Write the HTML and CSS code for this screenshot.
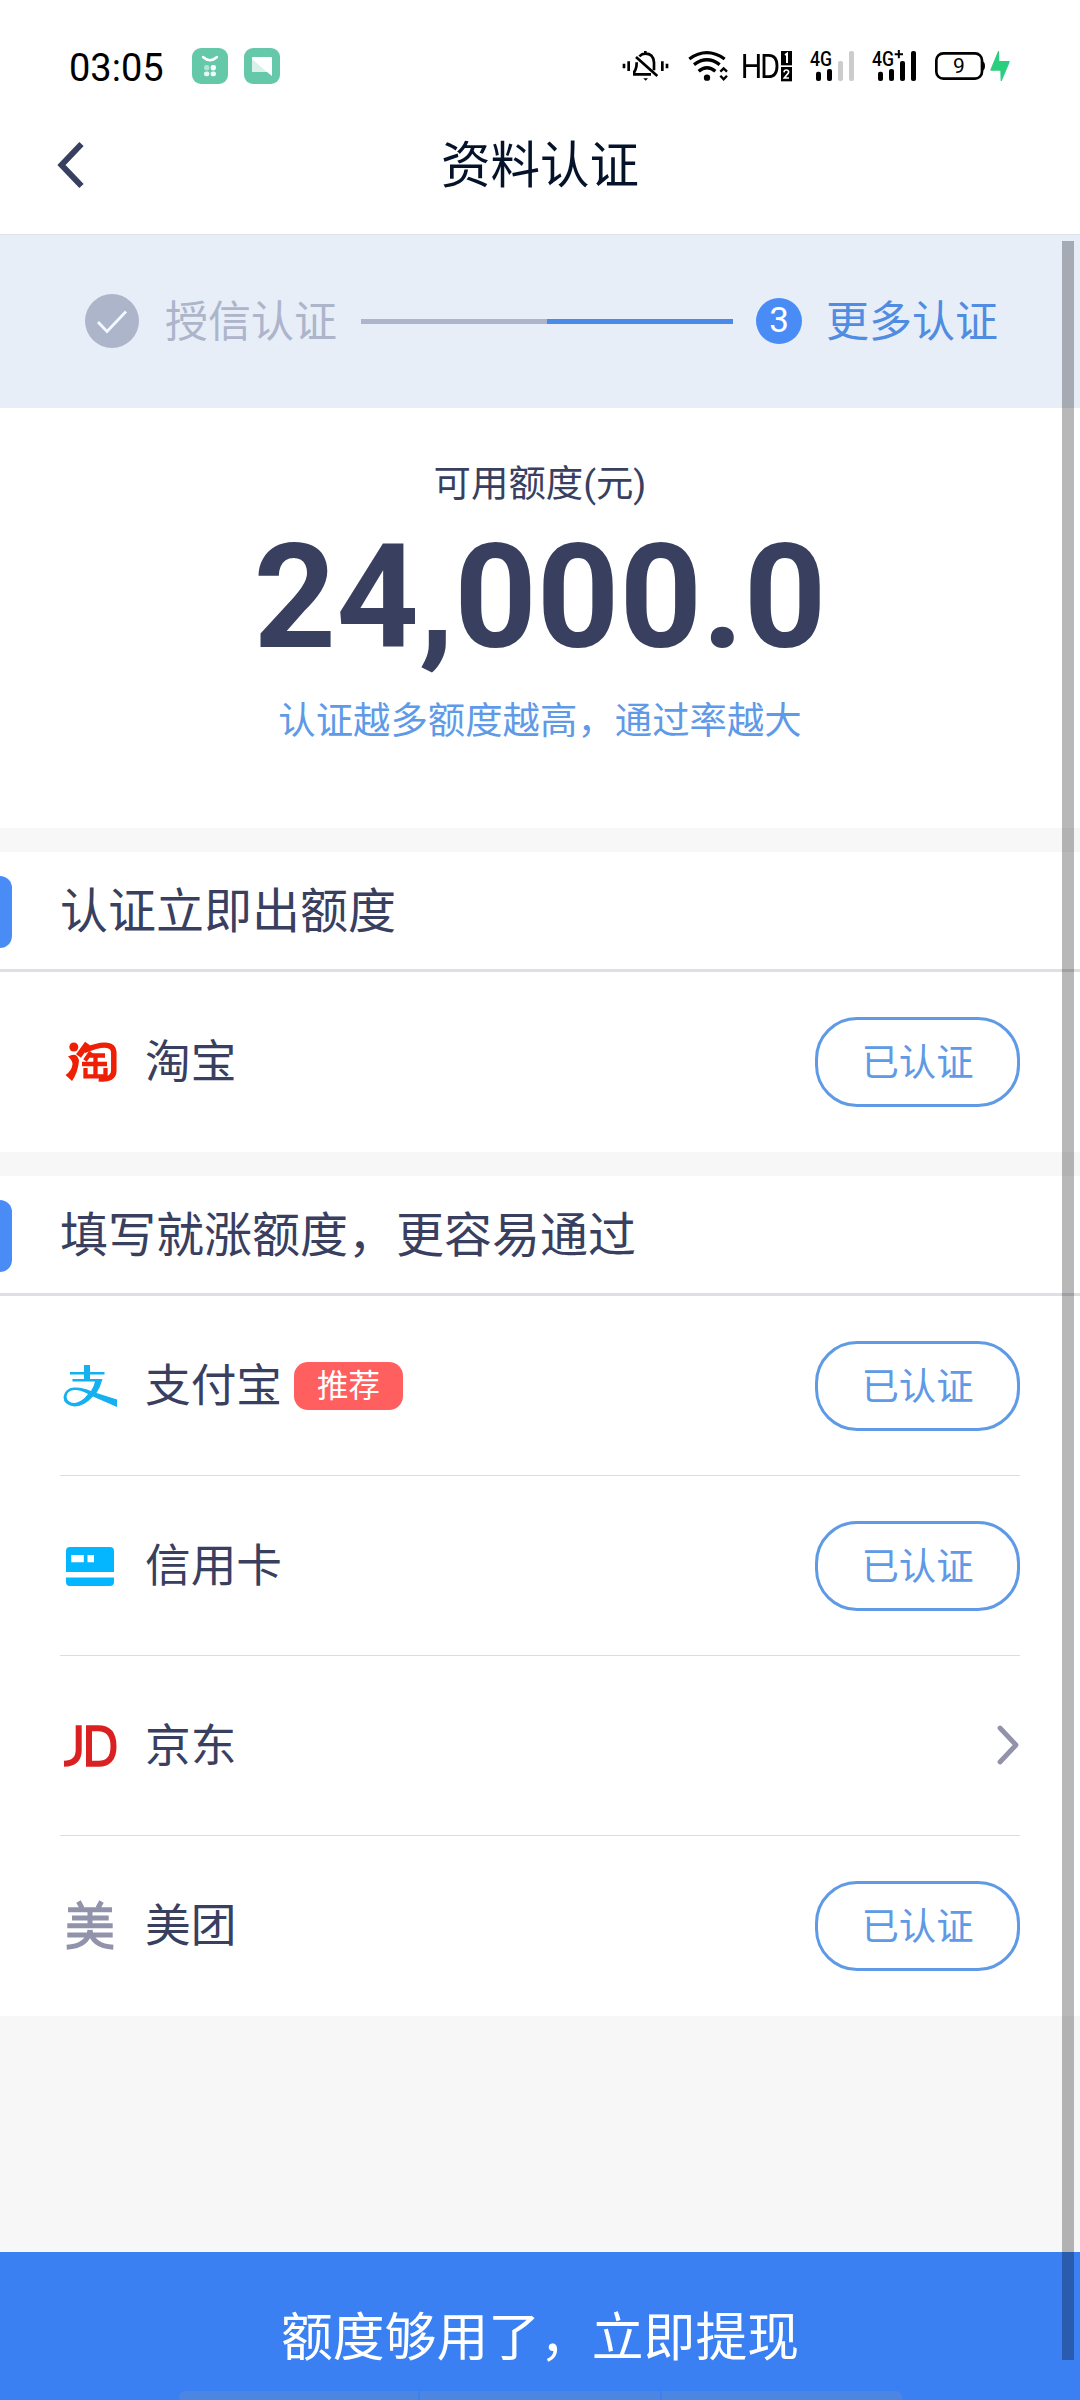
FILE: index.html
```html
<!DOCTYPE html>
<html lang="zh-CN">
<head>
<meta charset="utf-8">
<title>资料认证</title>
<link rel="stylesheet" href="styles.css">
</head>
<body>
<div class="app">
  <div class="status">
    <span class="clock">03:05</span>
    <svg class="notice" viewBox="0 0 36 36"><rect width="36" height="36" rx="9" fill="#65c9a9"/><path d="M11 9q7 6.500 14 0" fill="none" stroke="#fff" stroke-width="2.400" stroke-linecap="round"/><g fill="#fff"><rect x="12" y="17" width="5.400" height="5.400" rx="2.400" opacity=".5"/><rect x="18.600" y="17" width="5.400" height="5.400" rx="2.400"/><rect x="12" y="23.400" width="5.400" height="4.800" rx="2.200" opacity=".85"/><rect x="18.600" y="23.400" width="5.400" height="4.800" rx="2.200" opacity=".9"/></g></svg>
    <svg class="notice" viewBox="0 0 36 36"><rect width="36" height="36" rx="9" fill="#65c9a9"/><path d="M9 9h18q1 0 1 1v18l-5-4H9q-1 0-1-1V10q0-1 1-1z" fill="#fff"/><path d="M8 11l15 13H9q-1 0-1-1z" fill="#d9f1e9"/></svg>
    <div class="indicators">
      <svg class="ind-bell" viewBox="69 60 141 96" fill="none" stroke="#000" stroke-width="8"><path d="M75 101v14M89 94v29M190 94v29M204 101v14M139 63v8M121 79q8-8 18-8q24 0 26 26v24M113 97q0 20-7 28v8h50M111 81l64 57"/><path d="M133 145h14l-7 7z" fill="#000" stroke="none"/></svg>
      <svg class="ind-wifi" viewBox="267 60 123 96" fill="none" stroke="#000" stroke-width="10"><path d="M271 87q52-38 106 0M285 104q39-29 77 0M299 124q25-22 50 0"/><circle cx="324" cy="143" r="9.500" fill="#000" stroke="none"/><path d="M364 125l10-10 10 10M364 137l10 11 10-11" stroke-width="7"/></svg>
      <svg class="ind-hd" viewBox="432 60 150 96"><path d="M437 72v72M478 72v72M437 107h41M495 76v64h14q25 0 25-32t-25-32z" fill="none" stroke="#000" stroke-width="8.500"/><rect x="546" y="63" width="33" height="43"/><rect x="546" y="111" width="33" height="43"/><path d="M558 75l6-4v28" fill="none" stroke="#fff" stroke-width="6"/><path d="M555 127q1-8 8-7q8 2 5 9l-12 15h14" fill="none" stroke="#fff" stroke-width="5"/></svg>
      <svg class="ind-signal" viewBox="633 60 135 96"><text class="net" x="633" y="107" textLength="66" lengthAdjust="spacingAndGlyphs">4G</text><rect x="651" y="125" width="15" height="28" rx="6"/><rect x="684" y="117" width="15" height="36" rx="6"/><rect x="717" y="93" width="15" height="60" rx="6" fill="#ccc"/><rect x="750" y="63" width="15" height="90" rx="6" fill="#ccc"/></svg>
      <svg class="ind-signal" viewBox="819 60 135 96"><text class="net" x="819" y="107" textLength="66" lengthAdjust="spacingAndGlyphs">4G</text><path d="M887 73h25M899.500 60v25" stroke="#000" stroke-width="6"/><rect x="837" y="125" width="15" height="28" rx="6"/><rect x="870" y="117" width="15" height="36" rx="6"/><rect x="903" y="93" width="15" height="60" rx="6"/><rect x="936" y="63" width="15" height="90" rx="6"/></svg>
      <svg class="ind-battery" viewBox="1005 60 156 96"><rect x="1012" y="70" width="137" height="76" rx="21" fill="none" stroke="#000" stroke-width="8"/><path d="M1150 93q8 3 8 15t-8 15z"/><text class="level" x="1080" y="129" text-anchor="middle">9</text></svg>
      <svg class="ind-bolt" viewBox="1173 60 60 96"><path d="M1200 62l1 31h30q2 2 0 6l-23 54h-3l-1-31h-29q-2-2 0-5l22-53z" fill="#2bce7e"/></svg>
    </div>
  </div>
  <header class="nav">
    <svg class="back" viewBox="0 0 28 50"><path d="M24.500 4L4.500 25l20 21" fill="none" stroke="#39405f" stroke-width="6"/></svg>
    <h1>资料认证</h1>
  </header>
  <section class="steps">
    <svg class="done" viewBox="0 0 54 54"><circle cx="27" cy="27" r="27" fill="#adb5cb"/><path d="M13 28l9 9.500 19-20" fill="none" stroke="#f4f8ff" stroke-width="2.800"/></svg>
    <span class="step step-past">授信认证</span>
    <div class="track"></div>
    <span class="num">3</span>
    <span class="step step-now">更多认证</span>
  </section>
  <section class="quota">
    <p class="quota-label">可用额度(元)</p>
    <p class="quota-value">24,000.0</p>
    <p class="quota-tip">认证越多额度越高，通过率越大</p>
  </section>
  <section class="group">
    <h2>认证立即出额度</h2>
    <ul>
      <li>
        <svg class="logo" viewBox="0 0 60 60" fill="none" stroke="#ee1f05"><circle cx="13.800" cy="15" r="4.500" fill="#ee1f05" stroke="none"/><path d="M8 24.500q9-5 11 4q-1 12-7 20.500l-6.500-6q6-4 7-10.500q0-4-4.500-8z" fill="#ee1f05" stroke="none"/><path d="M27.500 11.500L18.500 24" stroke-width="6"/><path d="M24 18.500q22-9 28-3q2 2 1.800 7v16q0 10-15 8.300" stroke-width="5.500"/><path d="M31 20l-6 8.500M29 23.500h16M22 32h25M35.500 23v21M25.500 36v8.300h20M45.500 36v10" stroke-width="4.300"/></svg>
        <span class="name">淘宝</span><span class="pill">已认证</span>
      </li>
    </ul>
  </section>
  <section class="group">
    <h2>填写就涨额度，更容易通过</h2>
    <ul>
      <li>
        <svg class="logo" viewBox="0 0 60 60"><path d="M24 9h6v7H44.500v2.600H30v4.400h12.500q-2 8-6 14L57 43.500v7.500L33 40.500Q24 50.500 14 50.500Q3.500 49 3.500 41Q5 32 14 31.500q8-.5 17 3.500q3-4.500 4-9.500H12.500v-2.500H24V18.600H10V16h14zM28 38q-8-4.500-14-4q-7.500 1-7.500 7q1 6 8.500 6q7-1 13-9z" fill="#14b0ef" fill-rule="evenodd"/></svg>
        <span class="name">支付宝</span><span class="tag">推荐</span><span class="pill">已认证</span>
      </li>
      <li>
        <svg class="logo" viewBox="0 0 60 60"><path d="M10 11h40q4 0 4 4v21H6V15q0-4 4-4zM6 41.500h48V46q0 4-4 4H10q-4 0-4-4z" fill="#04b6ff"/><path d="M11.300 19h12.500v7.300H11.300zM27.500 19H34v7.300h-6.500z" fill="#fff"/></svg>
        <span class="name">信用卡</span><span class="pill">已认证</span>
      </li>
      <li>
        <svg class="logo" viewBox="0 0 60 60" fill="none" stroke="#da2020" stroke-width="6"><path d="M18.700 9.300V34q0 13.500-14.700 13.800"/><path d="M29 12.200H38q15.500 0 15.500 18T38 47.800h-9z"/></svg>
        <span class="name">京东</span>
        <svg class="more" viewBox="0 0 22 40"><path d="M3 3l16 17L3 37" fill="none" stroke="#9293aa" stroke-width="4.800" stroke-linecap="round" stroke-linejoin="round"/></svg>
      </li>
      <li>
        <svg class="logo" viewBox="0 0 60 60" fill="none" stroke="#9193aa" stroke-width="5"><path d="M18.500 5.500l3.500 6.500M41.500 5.500L38 12M8 13.700h44M12 22h36.700M7.300 29.700h45.400M7.300 39h45.400M30 13.700v16M30 34q-2 16-23.300 17.300M30 34q2 16 23.300 17.300"/></svg>
        <span class="name">美团</span><span class="pill">已认证</span>
      </li>
    </ul>
  </section>
  <footer class="submit">
    <span>额度够用了，立即提现</span>
    <div class="handles"><i></i><i></i><i></i></div>
  </footer>
  <div class="scrollbar"></div>
</div>
</body>
</html>
```
FILE: styles.css
```css
* { box-sizing: border-box; margin: 0; padding: 0; }
body { background: #f7f7f7; font-family: Roboto, "Noto Sans CJK SC", sans-serif; color: #39405f; }
svg { display: block; flex: none; overflow: visible; }
.app { position: relative; width: 1080px; height: 2400px; display: flex; flex-direction: column; overflow: hidden; background: #f7f7f7; }

.status { height: 96px; padding: 36px 70px 0 69px; display: flex; align-items: center; background: #fff; color: #000; }
.clock { width: 123px; font-size: 38px; line-height: 60px; padding-top: 3px; }
.notice { width: 36px; height: 36px; margin-right: 16px; }
.indicators { display: flex; margin-left: auto; height: 32px; }
.indicators svg { height: 32px; }
.ind-bell { width: 47px; margin-right: 19px; }
.ind-wifi { width: 41px; margin-right: 14px; }
.ind-hd { width: 50px; margin-right: 17px; }
.ind-signal { width: 45px; margin-right: 17px; }
.ind-battery { width: 52px; margin-right: 4px; }
.ind-bolt { width: 20px; }
.net { font-size: 60px; font-weight: 500; }
.level { font-size: 63px; font-weight: 400; }

.nav { height: 138px; display: grid; grid-template-columns: 120px 1fr 120px; align-items: center; background: #fff; }
.back { width: 28px; height: 50px; margin-left: 57px; }
.nav h1 { font-size: 49.5px; font-weight: 400; line-height: 70px; padding-top: 2px; text-align: center; color: #04122a; }

.steps { height: 174px; border-top: 1px solid #dde2ea; background: #e7eef8; padding: 0 0 1px 85px; display: flex; align-items: center; }
.done { width: 54px; height: 54px; }
.step { font-size: 43px; line-height: 60px; padding-top: 2px; white-space: nowrap; }
.step-past { color: #adb5cb; width: 196px; margin: 0 0 0 26px; }
.track { width: 372px; height: 5px; background: linear-gradient(90deg, #adb5cb 50%, #4a8ae8 50%); }
.num { width: 46px; height: 46px; margin: 0 24px 0 23px; border-radius: 50%; background: #4a8cf6; color: #fff; font-size: 35px; line-height: 46px; text-align: center; }
.step-now { color: #4f8ce2; }

.quota { height: 420px; background: #fff; text-align: center; padding-top: 49px; }
.quota-label { font-size: 37.4px; line-height: 54px; }
.quota-value { font-size: 144px; font-weight: 700; line-height: 170px; padding-top: 2px; }
.quota-tip { font-size: 37.4px; line-height: 54px; color: #5f9ae8; margin-top: 11px; }

.group { background: #fff; margin-bottom: 24px; }
.quota + .group { margin-top: 24px; }
.group h2 { height: 120px; padding-left: 60px; border-bottom: 3px solid #dcdfe4; font-size: 48px; font-weight: 400; line-height: 72px; padding-top: 3px; display: flex; align-items: center; }
.group h2::before { content: ""; width: 12px; height: 72px; margin: 0 48px 0 -60px; border-radius: 0 12px 12px 0; background: #4a8cf6; }
.group ul { list-style: none; padding: 0 60px; }
.group li { height: 180px; display: flex; align-items: center; }
.group li:not(:last-child) { border-bottom: 1px solid #dcdddf; }
.logo { width: 60px; height: 60px; }
.name { font-size: 45.7px; line-height: 66px; margin: 0 12px 0 25px; padding-top: 2px; }
.tag { width: 109px; height: 48px; border-radius: 14px; background: #ff5f5f; color: #fff; font-size: 31.5px; line-height: 49px; text-align: center; }
.pill { width: 205px; height: 90px; margin-left: auto; border: 3px solid #5f9ae6; border-radius: 42px; color: #5f9ae6; font-size: 37.4px; line-height: 87px; text-align: center; }
.more { width: 22px; height: 40px; margin: 0 1px 2px auto; }

.submit { height: 148px; margin-top: auto; background: #3a80f3; color: #fff; font-size: 51.8px; text-align: center; display: flex; flex-direction: column; align-items: center; }
.submit span { line-height: 76px; margin-top: 49px; }
.handles { display: flex; gap: 2px; width: 723px; height: 9px; margin-top: auto; border-radius: 6px 6px 0 0; overflow: hidden; }
.handles i { flex: 1; background: #4b86e2; }
.scrollbar { position: absolute; top: 241px; left: 1062px; width: 12px; height: 2119px; background: rgba(0, 0, 0, .28); }
```
